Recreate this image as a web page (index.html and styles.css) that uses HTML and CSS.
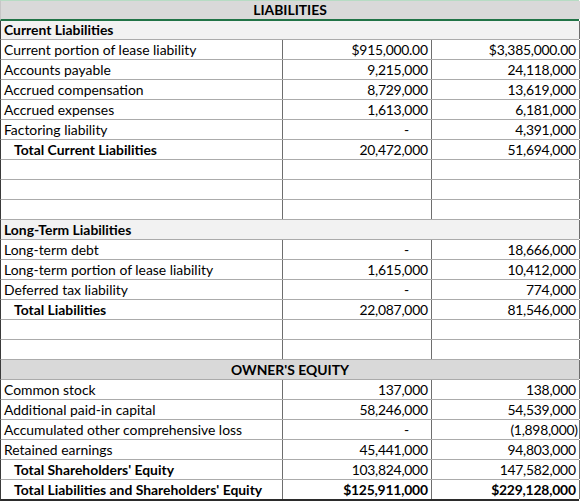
FILE: index.html
```html
<!DOCTYPE html>
<html>
<head>
<meta charset="utf-8">
<link rel="stylesheet" href="styles.css">
</head>
<body>
<div class="sheet">
  <div class="row title"><div class="cell full center bold">LIABILITIES</div></div>
  <div class="row section first"><div class="cell full bold">Current Liabilities</div></div>
  <div class="row"><div class="cell">Current portion of lease liability</div><div class="cell num">$915,000.00</div><div class="cell num">$3,385,000.00</div></div>
  <div class="row"><div class="cell">Accounts payable</div><div class="cell num">9,215,000</div><div class="cell num">24,118,000</div></div>
  <div class="row"><div class="cell">Accrued compensation</div><div class="cell num">8,729,000</div><div class="cell num">13,619,000</div></div>
  <div class="row"><div class="cell">Accrued expenses</div><div class="cell num">1,613,000</div><div class="cell num">6,181,000</div></div>
  <div class="row"><div class="cell">Factoring liability</div><div class="cell num dash">-</div><div class="cell num">4,391,000</div></div>
  <div class="row"><div class="cell bold indent">Total Current Liabilities</div><div class="cell num">20,472,000</div><div class="cell num">51,694,000</div></div>
  <div class="row"><div class="cell"></div><div class="cell"></div><div class="cell"></div></div>
  <div class="row"><div class="cell"></div><div class="cell"></div><div class="cell"></div></div>
  <div class="row"><div class="cell"></div><div class="cell"></div><div class="cell"></div></div>
  <div class="row section"><div class="cell full bold">Long-Term Liabilities</div></div>
  <div class="row"><div class="cell">Long-term debt</div><div class="cell num dash">-</div><div class="cell num">18,666,000</div></div>
  <div class="row"><div class="cell">Long-term portion of lease liability</div><div class="cell num">1,615,000</div><div class="cell num">10,412,000</div></div>
  <div class="row"><div class="cell">Deferred tax liability</div><div class="cell num dash">-</div><div class="cell num">774,000</div></div>
  <div class="row"><div class="cell bold indent">Total Liabilities</div><div class="cell num">22,087,000</div><div class="cell num">81,546,000</div></div>
  <div class="row"><div class="cell"></div><div class="cell"></div><div class="cell"></div></div>
  <div class="row"><div class="cell"></div><div class="cell"></div><div class="cell"></div></div>
  <div class="row band"><div class="cell full center bold">OWNER'S EQUITY</div></div>
  <div class="row"><div class="cell">Common stock</div><div class="cell num">137,000</div><div class="cell num">138,000</div></div>
  <div class="row"><div class="cell">Additional paid-in capital</div><div class="cell num">58,246,000</div><div class="cell num">54,539,000</div></div>
  <div class="row"><div class="cell">Accumulated other comprehensive loss</div><div class="cell num dash">-</div><div class="cell num neg">(1,898,000)</div></div>
  <div class="row"><div class="cell">Retained earnings</div><div class="cell num">45,441,000</div><div class="cell num">94,803,000</div></div>
  <div class="row"><div class="cell bold indent">Total Shareholders' Equity</div><div class="cell num">103,824,000</div><div class="cell num">147,582,000</div></div>
  <div class="row last"><div class="cell bold indent">Total Liabilities and Shareholders' Equity</div><div class="cell num bold">$125,911,000</div><div class="cell num bold">$229,128,000</div></div>
</div>
</body>
</html>
```

FILE: styles.css
```css
html, body {
  margin: 0;
  padding: 0;
  background: #ffffff;
}
.sheet {
  width: 579px;
  font-family: Lato, "Open Sans", sans-serif;
  font-size: 13.9px;
  color: #000;
}
.row {
  display: grid;
  grid-template-columns: 282px 149px 148px;
  height: 20px;
  box-sizing: border-box;
  border-bottom: 1px solid #ababab;
  border-left: 1px solid #3a3a3a;
}
.cell {
  box-sizing: border-box;
  height: 19px;
  line-height: 19px;
  padding: 0 3px;
  white-space: nowrap;
  overflow: hidden;
  border-right: 1px solid #6e6e6e;
}
.cell.full {
  grid-column: 1 / 4;
}
.title {
  background: #d9d9d9;
  border-top: 1px solid #b7dcc4;
  border-bottom: 2px solid #217346;
  border-left-color: #c6c6c6;
  height: 21px;
}
.title .cell {
  height: 18px;
  line-height: 18px;
  border-right-color: #d9d9d9;
}
.section {
  background: #f2f2f2;
}
.first {
  height: 19px;
}
.first .cell {
  height: 18px;
  line-height: 17px;
}
.band {
  background: #d9d9d9;
}
.center { text-align: center; }
.bold { font-weight: 700; }
.indent { padding-left: 13px; }
.num {
  text-align: right;
  letter-spacing: -0.25px;
  padding-right: 3.25px;
}
.num.bold {
  letter-spacing: -0.2px;
  padding-right: 3.2px;
}
.num.dash { padding-right: 22px; }
.num.neg { padding-right: 1.25px; }
.last {
  border-bottom: 2px solid #2b2b2b;
  height: 21px;
}
```
